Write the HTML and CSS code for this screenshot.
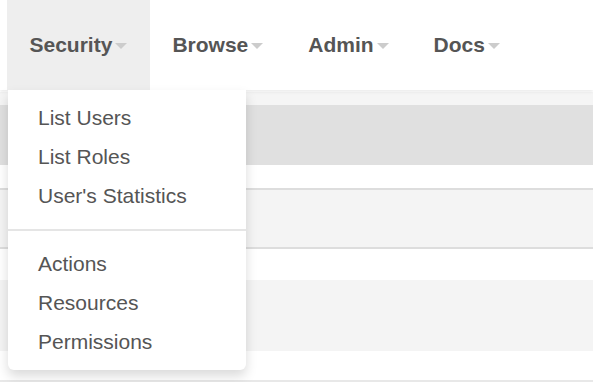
FILE: index.html
```html
<!DOCTYPE html>
<html lang="en">
<head>
    <meta charset="UTF-8">
    <meta name="viewport" content="width=device-width, initial-scale=1.0">
    <title>Admin</title>
    <link rel="stylesheet" href="styles.css">
</head>
<body>

    <div class="navbar">
        <ul class="nav">
            <li class="nav-item open">
                <a href="#">Security<span class="caret"></span></a>
                <ul class="dropdown-menu">
                    <li><a href="#">List Users</a></li>
                    <li><a href="#">List Roles</a></li>
                    <li><a href="#">User's Statistics</a></li>
                    <li class="divider"></li>
                    <li><a href="#">Actions</a></li>
                    <li><a href="#">Resources</a></li>
                    <li><a href="#">Permissions</a></li>
                </ul>
            </li>
            <li class="nav-item"><a href="#">Browse<span class="caret"></span></a></li>
            <li class="nav-item"><a href="#">Admin<span class="caret"></span></a></li>
            <li class="nav-item"><a href="#">Docs<span class="caret"></span></a></li>
        </ul>
    </div>

    <div class="content">
        <div class="row row-top"></div>
        <div class="row row-head"></div>
        <div class="row row-blank"></div>
        <div class="row row-odd"></div>
        <div class="row row-blank short"></div>
        <div class="row row-odd tall"></div>
        <div class="row row-blank last"></div>
    </div>

</body>
</html>
```

FILE: styles.css
```css
body {
    font-family: "Liberation Sans", Arial, sans-serif;
    background-color: #fff;
    color: #555;
    margin: 0;
    padding: 0;
}

ul {
    list-style-type: none;
    margin: 0;
    padding: 0;
}

a {
    text-decoration: none;
    color: #555;
}

.navbar {
    position: relative;
    z-index: 2;
    height: 90px;
    background-color: #fff;
    box-shadow: 0 2px 3px rgba(0, 0, 0, 0.08);
}

.nav {
    display: flex;
    padding-left: 7px;
}

.nav-item {
    position: relative;
}

.nav-item > a {
    display: block;
    padding: 30px 22.5px;
    line-height: 30px;
    font-size: 21px;
    font-weight: bold;
}

.nav-item.open > a {
    background-color: #eee;
}

.caret {
    display: inline-block;
    width: 0;
    height: 0;
    margin-left: 3px;
    vertical-align: middle;
    border-top: 6px solid #ccc;
    border-left: 6px solid transparent;
    border-right: 6px solid transparent;
}

.dropdown-menu {
    position: absolute;
    top: 90px;
    left: 1px;
    width: 238px;
    padding: 8px 0 9px 0;
    background-color: #fff;
    border-radius: 0 0 6px 6px;
    box-shadow: 0 6px 12px rgba(0, 0, 0, 0.15);
}

.dropdown-menu li a {
    display: block;
    padding: 4.5px 30px;
    line-height: 30px;
    font-size: 21px;
    color: #555;
}

.dropdown-menu .divider {
    height: 2px;
    margin: 13.5px 0;
    background-color: #e5e5e5;
}

.content {
    position: relative;
    z-index: 1;
}

.row {
    border-bottom: 2px solid #ddd;
}

.row-top {
    height: 13px;
    background-color: #f5f5f5;
    border-bottom: none;
    margin-top: 2px;
}

.row-head {
    height: 60px;
    background-color: #e0e0e0;
    border-bottom: none;
}

.row-blank {
    height: 23px;
    background-color: #fff;
}

.row-odd {
    height: 57px;
    background-color: #f4f4f4;
}

.row-blank.short {
    height: 31px;
    border-bottom: none;
}

.row-odd.tall {
    height: 71px;
    border-bottom: none;
}

.row-blank.last {
    height: 29px;
    border-bottom-color: #e8e8e8;
}
```
